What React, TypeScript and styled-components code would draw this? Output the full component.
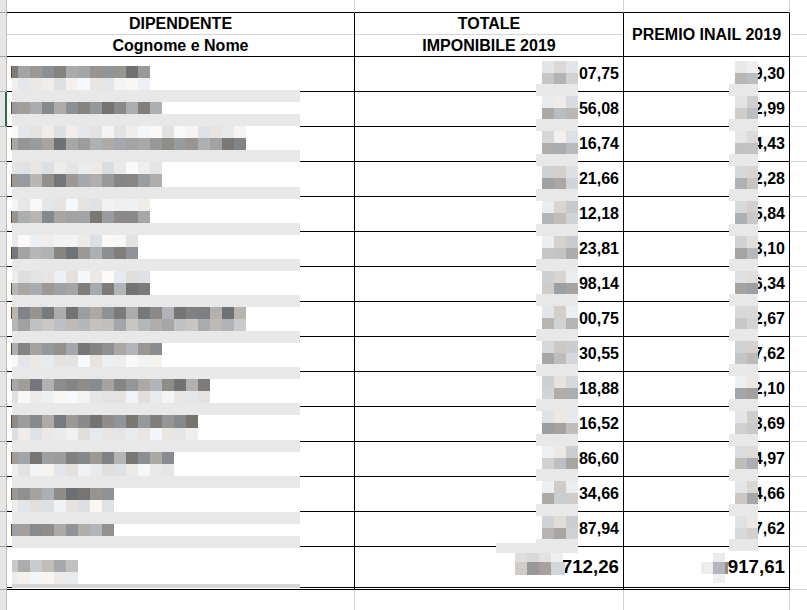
import React from "react";
import styled, { createGlobalStyle } from "styled-components";

const GRID = "#d4d4d4";
const INK = "#000";

const GlobalStyle = createGlobalStyle`
  * { box-sizing: border-box; }
  html, body { margin: 0; padding: 0; background: #fff; }
  body { font-family: "Liberation Sans", Arial, sans-serif; color: #000; }
`;

const Sheet = styled.div`
  position: relative;
  width: 807px;
  height: 610px;
  overflow: hidden;
  background: #fff;
  display: flex;
  flex-direction: column;
`;

const Row = styled.div<{ $h: number }>`
  display: grid;
  grid-template-columns: 7px 348px 269px 166px 1fr;
  height: ${(p) => p.$h}px;
  flex: none;
`;

const Strip = styled.div<{ $tick?: boolean; $selected?: boolean }>`
  background: #e6e6e6;
  border-right: 1px solid ${(p) => (p.$selected ? "#217346" : "#bdbdbd")};
  border-bottom: ${(p) => (p.$tick ? "1px solid #a3a3a3" : "none")};
  box-shadow: ${(p) => (p.$selected ? "inset -1px 0 0 #217346" : "none")};
`;

const Cell = styled.div<{ $right?: string; $bottom?: string }>`
  border-right: ${(p) => p.$right ?? "none"};
  border-bottom: ${(p) => p.$bottom ?? "none"};
`;

const HeadCell = styled(Cell)`
  display: flex;
  flex-direction: column;
`;

const HeadLine = styled.div<{ $split?: boolean }>`
  flex: ${(p) => (p.$split ? "0 0 22px" : "1")};
  display: flex;
  align-items: center;
  justify-content: center;
  font-size: 16px;
  font-weight: 700;
  border-bottom: ${(p) => (p.$split ? `1px solid ${GRID}` : "none")};
`;

const HeadSingle = styled(Cell)`
  display: flex;
  align-items: center;
  justify-content: center;
  font-size: 16px;
  font-weight: 700;
`;

const NumCell = styled(Cell)<{ $big?: boolean }>`
  display: flex;
  align-items: center;
  justify-content: flex-end;
  padding-right: 4px;
  font-size: ${(p) => (p.$big ? "18.7px" : "16px")};
  font-weight: 700;
  white-space: nowrap;
`;

const Mosaic = styled.svg`
  position: absolute;
  left: 0;
  top: 0;
  pointer-events: none;
`;

const rows = [
  ["07,75", "9,30"],
  ["56,08", "2,99"],
  ["16,74", "4,43"],
  ["21,66", "2,28"],
  ["12,18", "5,84"],
  ["23,81", "3,10"],
  ["98,14", "6,34"],
  ["00,75", "2,67"],
  ["30,55", "7,62"],
  ["18,88", "2,10"],
  ["16,52", "3,69"],
  ["86,60", "4,97"],
  ["34,66", "4,66"],
  ["87,94", "7,62"],
];

type Kind = "d" | "l" | "m" | "b" | "B" | "w";

// pixelated names, one entry per 12px band of the blur, with the right edge of the blocks
const nameRows: [Kind, number][] = [
  ["d", 150], ["l", 150], ["b", 0], ["d", 162], ["b", 0],
  ["l", 246], ["d", 246], ["b", 0], ["l", 162], ["d", 162], ["b", 0],
  ["l", 150], ["d", 150], ["b", 0], ["l", 138], ["d", 138], ["b", 0],
  ["l", 150], ["d", 150], ["b", 0], ["d", 246], ["m", 246], ["b", 0],
  ["d", 162], ["l", 162], ["b", 0], ["d", 210], ["l", 210], ["b", 0],
  ["d", 198], ["l", 198], ["b", 0], ["d", 174], ["l", 174], ["b", 0],
  ["d", 114], ["l", 114], ["b", 0], ["d", 114], ["b", 0], ["w", 0],
  ["m", 78], ["l", 78], ["B", 0],
];

const shade = (seed: number, lo: number, hi: number) => {
  const x = Math.sin(seed * 12.9898 + 78.233) * 43758.5453;
  const f = x - Math.floor(x);
  const v = Math.round(lo + f * (hi - lo));
  const t = Math.round(Math.sin(seed * 3.7) * 4);
  return `rgb(${v + t},${v},${v - t})`;
};

type R = { x: number; y: number; w: number; h: number; c: string };

const buildRects = (): R[] => {
  const out: R[] = [{ x: 12, y: 66, w: 288, h: 522, c: "#fff" }];
  const ranges: Record<string, [number, number]> = { d: [112, 182], l: [222, 250], m: [160, 205] };

  nameRows.forEach(([kind, end], k) => {
    const y = Math.round(66 + k * 12.05);
    const h = kind === "B" ? 588 - y : Math.round(66 + (k + 1) * 12.05) - y;
    if (kind === "b") out.push({ x: 12, y, w: 288, h, c: "#e8e8e8" });
    else if (kind === "B") out.push({ x: 12, y, w: 288, h, c: "#d6d6d6" });
    else if (kind !== "w") {
      const [lo, hi] = ranges[kind];
      for (let x = 12, i = 0; x < end; i++) {
        const w = x === 12 ? 6 : Math.min(12, end - x);
        out.push({ x, y, w, h, c: shade(k * 31 + i, lo, hi) });
        x += w;
      }
      if (kind === "d") out.push({ x: 11, y, w: 1, h, c: "#6b4a22" });
    }
  });

  // pixelated leading digits of each amount
  rows.forEach((_, r) => {
    const top = 56 + 35 * r;
    const bottom = top + 35;
    const cols = [
      { bx: 536, bw: 42, xs: [542, 554, 566], ws: [12, 12, 12] },
      { bx: 729, bw: 29, xs: [735, 747], ws: [12, 11] },
    ];
    cols.forEach((col, ci) => {
      col.xs.forEach((x, i) => {
        out.push({ x, y: top + 5, w: col.ws[i], h: 12, c: shade(r * 17 + ci * 5 + i + 400, 200, 240) });
        out.push({ x, y: top + 17, w: col.ws[i], h: bottom - 7 - (top + 17), c: shade(r * 19 + ci * 7 + i + 900, 158, 218) });
      });
      out.push({ x: col.bx, y: bottom - 7, w: col.bw, h: 12, c: "#e8e8e8" });
    });
  });

  // totals
  out.push({ x: 496, y: 543, w: 82, h: 10, c: "#e8e8e8" });
  ["#dedede", "#d8d8d8", "#e2e2e2", "#efefef"].forEach((c, i) =>
    out.push({ x: 515 + i * 12, y: 553, w: 12, h: 9, c })
  );
  ["#d1ccc8", "#989898", "#a7a09c", "#d2d6da"].forEach((c, i) =>
    out.push({ x: 515 + i * 12, y: 562, w: i === 3 ? 14 : 12, h: 13, c })
  );
  out.push({ x: 713, y: 553, w: 12, h: 9, c: "#ebebeb" });
  out.push({ x: 701, y: 562, w: 12, h: 12, c: "#ececec" });
  out.push({ x: 713, y: 562, w: 12, h: 12, c: "#b4b6bd" });
  out.push({ x: 725, y: 562, w: 3, h: 12, c: "#9a8a80" });
  out.push({ x: 713, y: 574, w: 12, h: 9, c: "#eef0ee" });
  return out;
};

const rects = buildRects();

const line = `1px solid ${INK}`;
const grid = `1px solid ${GRID}`;

export default function App() {
  return (
    <Sheet>
      <GlobalStyle />
      <Row $h={13}>
        <Strip $tick />
        <Cell $right={grid} $bottom={line} />
        <Cell $right={grid} $bottom={line} />
        <Cell $right={grid} $bottom={line} />
        <Cell />
      </Row>

      <Row $h={44}>
        <Strip $tick />
        <HeadCell $right={line} $bottom={line}>
          <HeadLine $split>DIPENDENTE</HeadLine>
          <HeadLine>Cognome e Nome</HeadLine>
        </HeadCell>
        <HeadCell $right={line} $bottom={line}>
          <HeadLine $split>TOTALE</HeadLine>
          <HeadLine>IMPONIBILE 2019</HeadLine>
        </HeadCell>
        <HeadSingle $right={line} $bottom={line}>PREMIO INAIL 2019</HeadSingle>
        <HeadCell $bottom={grid}>
          <HeadLine $split />
          <HeadLine />
        </HeadCell>
      </Row>

      {rows.map(([tot, premio], i) => (
        <Row $h={35} key={i}>
          <Strip $tick $selected={i === 1} />
          <Cell $right={line} $bottom={line} />
          <NumCell $right={line} $bottom={line}>{tot}</NumCell>
          <NumCell $right={line} $bottom={line}>{premio}</NumCell>
          <Cell $bottom={grid} />
        </Row>
      ))}

      <Row $h={43}>
        <Strip $tick />
        <Cell $right={line} $bottom={`3px double ${INK}`} />
        <NumCell $big $right={line} $bottom={`3px double ${INK}`}>712,26</NumCell>
        <NumCell $big $right={line} $bottom={`3px double ${INK}`}>917,61</NumCell>
        <Cell $bottom={grid} />
      </Row>

      <Row $h={20}>
        <Strip />
        <Cell $right={grid} />
        <Cell $right={grid} />
        <Cell $right={grid} />
        <Cell />
      </Row>

      <Mosaic width={807} height={610} viewBox="0 0 807 610">
        {rects.map((r, i) => (
          <rect key={i} x={r.x} y={r.y} width={r.w} height={r.h} fill={r.c} />
        ))}
      </Mosaic>
    </Sheet>
  );
}
